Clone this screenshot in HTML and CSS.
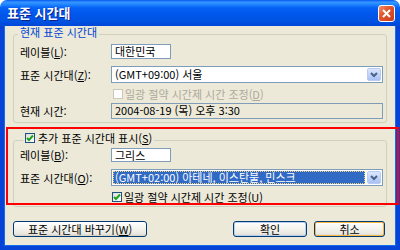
FILE: index.html
```html
<!DOCTYPE html>
<html lang="ko">
<head>
  <meta charset="UTF-8">
  <title>표준 시간대</title>
  <link rel="stylesheet" href="styles.css">
</head>
<body>

  <div class="window">
    <div class="titlebar">
      <span class="title">표준 시간대</span>
      <span class="close">
        <svg width="9" height="9" viewBox="0 0 9 9"><path d="M1 1 L8 8 M8 1 L1 8" stroke="#fff" stroke-width="2" fill="none"/></svg>
      </span>
    </div>

    <div class="frame">
      <fieldset class="group group-current">
        <legend>현재 표준 시간대</legend>
        <div class="row row-name">
          <span class="label">레이블(<u>L</u>):</span>
          <span class="textbox short">대한민국</span>
        </div>
        <div class="row row-zone">
          <span class="label">표준 시간대(<u>Z</u>):</span>
          <span class="combo">
            <span class="combo-text">(GMT+09:00) 서울</span>
            <span class="combo-btn">
              <svg width="8" height="6" viewBox="0 0 8 6"><path d="M1 1 L4 4 L7 1" stroke="#4D6185" stroke-width="2" fill="none"/></svg>
            </span>
          </span>
        </div>
        <div class="row row-check">
          <span class="check disabled"></span>
          <span class="check-text disabled">일광 절약 시간제 시간 조정(<u>D</u>)</span>
        </div>
        <div class="row row-time">
          <span class="label">현재 시간:</span>
          <span class="textbox readonly">2004-08-19 (목) 오후 3:30</span>
        </div>
      </fieldset>

      <div class="extra">
        <fieldset class="group group-extra">
          <legend>
            <span class="check checked">
              <svg width="8" height="8" viewBox="0 0 8 8"><path d="M1 4 L3 6 L7 1.5" stroke="#21A121" stroke-width="2" fill="none"/></svg>
            </span>
            <span>추가 표준 시간대 표시(<u>S</u>)</span>
          </legend>
          <div class="row row-name2">
            <span class="label">레이블(<u>B</u>):</span>
            <span class="textbox short">그리스</span>
          </div>
          <div class="row row-zone">
            <span class="label">표준 시간대(<u>O</u>):</span>
            <span class="combo">
              <span class="combo-text selected">(GMT+02:00) 아테네, 이스탄불, 민스크</span>
              <span class="combo-btn">
                <svg width="8" height="6" viewBox="0 0 8 6"><path d="M1 1 L4 4 L7 1" stroke="#4D6185" stroke-width="2" fill="none"/></svg>
              </span>
            </span>
          </div>
          <div class="row row-check row-check2">
            <span class="check checked">
              <svg width="8" height="8" viewBox="0 0 8 8"><path d="M1 4 L3 6 L7 1.5" stroke="#21A121" stroke-width="2" fill="none"/></svg>
            </span>
            <span class="check-text">일광 절약 시간제 시간 조정(<u>U</u>)</span>
          </div>
        </fieldset>
        <div class="highlight"></div>
      </div>

      <div class="buttons">
        <button class="btn btn-wide">표준 시간대 바꾸기(<u>W</u>)</button>
        <span class="spacer"></span>
        <button class="btn btn-ok">확인</button>
        <button class="btn btn-cancel">취소</button>
      </div>
    </div>
  </div>

</body>
</html>
```

FILE: styles.css
```css
body {
  margin: 0;
  font-family: "Noto Sans CJK KR", "Liberation Sans", sans-serif;
  font-size: 11px;
  color: #000;
  background: #fff;
}

.window {
  width: 400px;
  height: 250px;
  display: flex;
  flex-direction: column;
}

.titlebar {
  height: 26px;
  flex: none;
  box-sizing: border-box;
  display: flex;
  align-items: center;
  justify-content: space-between;
  padding: 0 5px 0 7px;
  border-radius: 7px 7px 0 0;
  background: linear-gradient(to bottom, #0058EE 0%, #3A93FF 8%, #288EFF 14%, #0661F5 30%, #0055EA 60%, #0054E3 80%, #0047D8 100%);
}

.title {
  color: #fff;
  font-weight: bold;
  font-size: 13px;
  line-height: 14px;
  text-shadow: 1px 1px #0F1F8C;
}

.close {
  width: 17px;
  height: 17px;
  box-sizing: border-box;
  border: 1px solid #fff;
  border-radius: 3px;
  background: linear-gradient(135deg, #F08F6C 0%, #E2572E 40%, #C93E1B 100%);
  display: flex;
  align-items: center;
  justify-content: center;
}

.frame {
  flex: 1;
  background: #ECE9D8;
  border: solid #0843D8;
  border-width: 0 4px 4px;
  box-shadow: inset 1px 0 #166AEE, inset -1px 0 #166AEE, inset 0 -1px #166AEE;
  display: flex;
  flex-direction: column;
}

.group {
  margin: 0 9px;
  padding: 0 3px 3px 6px;
  border: 1px solid #D0D0BF;
  border-radius: 3px;
  min-width: 0;
}

.group legend {
  padding: 0 2px 4px;
  margin-left: -2px;
  line-height: 12px;
  color: #0046D5;
}

.row {
  display: flex;
  align-items: center;
}

.label {
  width: 91px;
  flex: none;
  line-height: 12px;
}

.row-name {
  margin-top: 2px;
  height: 15px;
}

.row-zone {
  margin-top: 7px;
  height: 17px;
}

.row-check {
  margin-top: 5px;
  height: 11px;
  padding-left: 93px;
}

.row-time {
  margin-top: 4px;
  height: 16px;
}

.textbox {
  box-sizing: border-box;
  height: 100%;
  border: 1px solid #7F9DB9;
  background: #fff;
  padding: 0 3px;
  line-height: 13px;
  white-space: nowrap;
}

.textbox.short {
  width: 60px;
}

.textbox.readonly {
  flex: 1;
  background: #ECE9D8;
}

.combo {
  flex: 1;
  box-sizing: border-box;
  height: 100%;
  border: 1px solid #7F9DB9;
  background: #fff;
  display: flex;
  align-items: stretch;
  padding: 1px;
}

.combo-text {
  flex: 1;
  padding: 0 2px;
  line-height: 13px;
  white-space: nowrap;
}

.combo-text.selected {
  margin-right: 2px;
  background: #316AC5;
  color: #fff;
  outline: 1px dotted #F5D07A;
  outline-offset: -1px;
}

.combo-btn {
  width: 14px;
  box-sizing: border-box;
  border: 1px solid #B9CAF3;
  border-radius: 2px;
  background: linear-gradient(to bottom, #DCE7FE, #BCD0FA 60%, #A9C1F5);
  display: flex;
  align-items: center;
  justify-content: center;
}

.check {
  width: 10px;
  height: 10px;
  box-sizing: border-box;
  border: 1px solid #1C5180;
  background: linear-gradient(135deg, #DCDCD7, #FFFFFF);
  display: inline-flex;
  align-items: center;
  justify-content: center;
  flex: none;
}

.check.disabled {
  border-color: #CAC8BB;
  background: #fff;
}

.check-text {
  margin-left: 2px;
  line-height: 12px;
  white-space: nowrap;
}

.check-text.disabled {
  color: #ACA899;
}

.extra {
  position: relative;
  margin-top: 9px;
}

.group-extra {
  padding-bottom: 4px;
}

.group-extra legend {
  margin-left: 3px;
  color: #000;
  display: flex;
  align-items: center;
}

.group-extra legend .check {
  margin-right: 3px;
}

.row-name2 {
  margin-top: 0;
  height: 14px;
}

.row-check2 {
  padding-left: 92px;
}

.highlight {
  position: absolute;
  left: 2px;
  right: -3px;
  top: -5px;
  bottom: 2px;
  border: 2px solid #FF0000;
}

.buttons {
  display: flex;
  margin: 14px 11px 0 9px;
  gap: 7px;
}

.spacer {
  flex: 1;
}

.btn {
  height: 16px;
  padding: 0;
  font-family: inherit;
  font-size: 11px;
  line-height: 13px;
  color: #000;
  border: 1px solid #003C74;
  border-radius: 3px;
  background: linear-gradient(to bottom, #FFFFFF 0%, #F5F4EF 45%, #E8E6DD 85%, #D6D0C5 100%);
}

.btn-wide {
  width: 134px;
}

.btn-ok {
  width: 74px;
  box-shadow: inset 0 0 0 1px #B8CFF5;
}

.btn-cancel {
  width: 71px;
  box-shadow: inset 0 0 0 1px #F8B740;
}
```
